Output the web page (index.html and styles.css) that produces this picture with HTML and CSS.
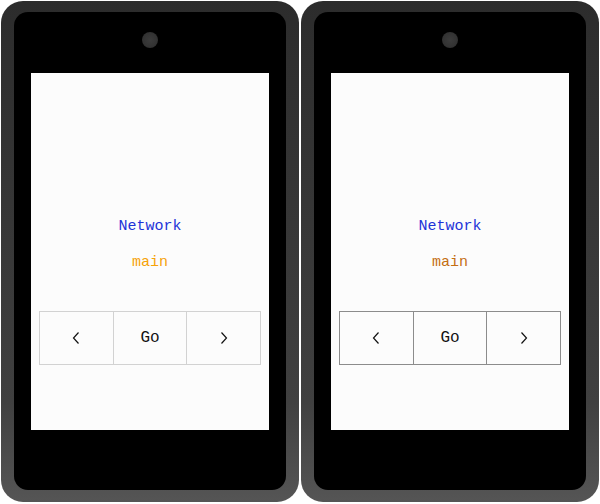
FILE: index.html
```html
<!DOCTYPE html>
<html>
<head>
<meta charset="utf-8">
<link rel="stylesheet" href="styles.css">
</head>
<body>
<div class="pair">
  <div class="slot">
    <div class="device">
      <div class="inner">
        <div class="camera"></div>
        <div class="screen">
          <div class="title">Network</div>
          <div class="value value-light">main</div>
          <div class="buttons buttons-light">
            <div class="btn"><svg class="chev" width="8" height="12" viewBox="0 0 8 12"><path d="M6.5 0.5 L1.5 6 L6.5 11.5" fill="none" stroke="#111" stroke-width="1.2"/></svg></div>
            <div class="btn">Go</div>
            <div class="btn"><svg class="chev" width="8" height="12" viewBox="0 0 8 12"><path d="M1.5 0.5 L6.5 6 L1.5 11.5" fill="none" stroke="#111" stroke-width="1.2"/></svg></div>
          </div>
        </div>
      </div>
    </div>
  </div>
  <div class="slot">
    <div class="device">
      <div class="inner">
        <div class="camera"></div>
        <div class="screen">
          <div class="title">Network</div>
          <div class="value value-dark">main</div>
          <div class="buttons buttons-dark">
            <div class="btn"><svg class="chev" width="8" height="12" viewBox="0 0 8 12"><path d="M6.5 0.5 L1.5 6 L6.5 11.5" fill="none" stroke="#111" stroke-width="1.2"/></svg></div>
            <div class="btn">Go</div>
            <div class="btn"><svg class="chev" width="8" height="12" viewBox="0 0 8 12"><path d="M1.5 0.5 L6.5 6 L1.5 11.5" fill="none" stroke="#111" stroke-width="1.2"/></svg></div>
          </div>
        </div>
      </div>
    </div>
  </div>
</div>
</body>
</html>
```

FILE: styles.css
```css
html, body {
  margin: 0;
  padding: 0;
  background: #ffffff;
}
.pair {
  display: flex;
  width: 600px;
  height: 504px;
}
.slot {
  width: 300px;
  padding: 1px 1px 2px 1px;
  box-sizing: border-box;
}
.device {
  height: 501px;
  border-radius: 22px;
  background: linear-gradient(180deg, #2c2c2c 0%, #363636 40%, #404040 80%, #555555 100%);
  padding: 11px 13px 12px 13px;
  box-sizing: border-box;
}
.inner {
  height: 100%;
  background: #000;
  border-radius: 14px;
  display: flex;
  flex-direction: column;
  align-items: center;
}
.camera {
  width: 16px;
  height: 16px;
  border-radius: 50%;
  background: radial-gradient(circle at 50% 50%, #3c3c3c 0%, #333 60%, #252525 100%);
  margin-top: 20px;
}
.screen {
  margin-top: 25px;
  width: 238px;
  height: 357px;
  background: #fcfcfc;
  box-sizing: border-box;
  padding: 144px 8px 0 8px;
  font-family: "Liberation Mono", "DejaVu Sans Mono", monospace;
  font-size: 15px;
  line-height: 20px;
  text-align: center;
}
.title {
  color: #1d33d8;
}
.value {
  margin-top: 16px;
}
.value-light { color: #f6a208; }
.value-dark { color: #c46e12; }
.buttons {
  margin-top: 38px;
  display: flex;
}
.btn {
  flex: 1;
  height: 54px;
  box-sizing: border-box;
  border: 1px solid #d2d2d2;
  color: #111;
  display: flex;
  align-items: center;
  justify-content: center;
  font-size: 16px;
}
.btn + .btn {
  margin-left: -1px;
}
.buttons-dark .btn {
  border-color: #8c8c8c;
}
.chev {
  display: block;
}
```
